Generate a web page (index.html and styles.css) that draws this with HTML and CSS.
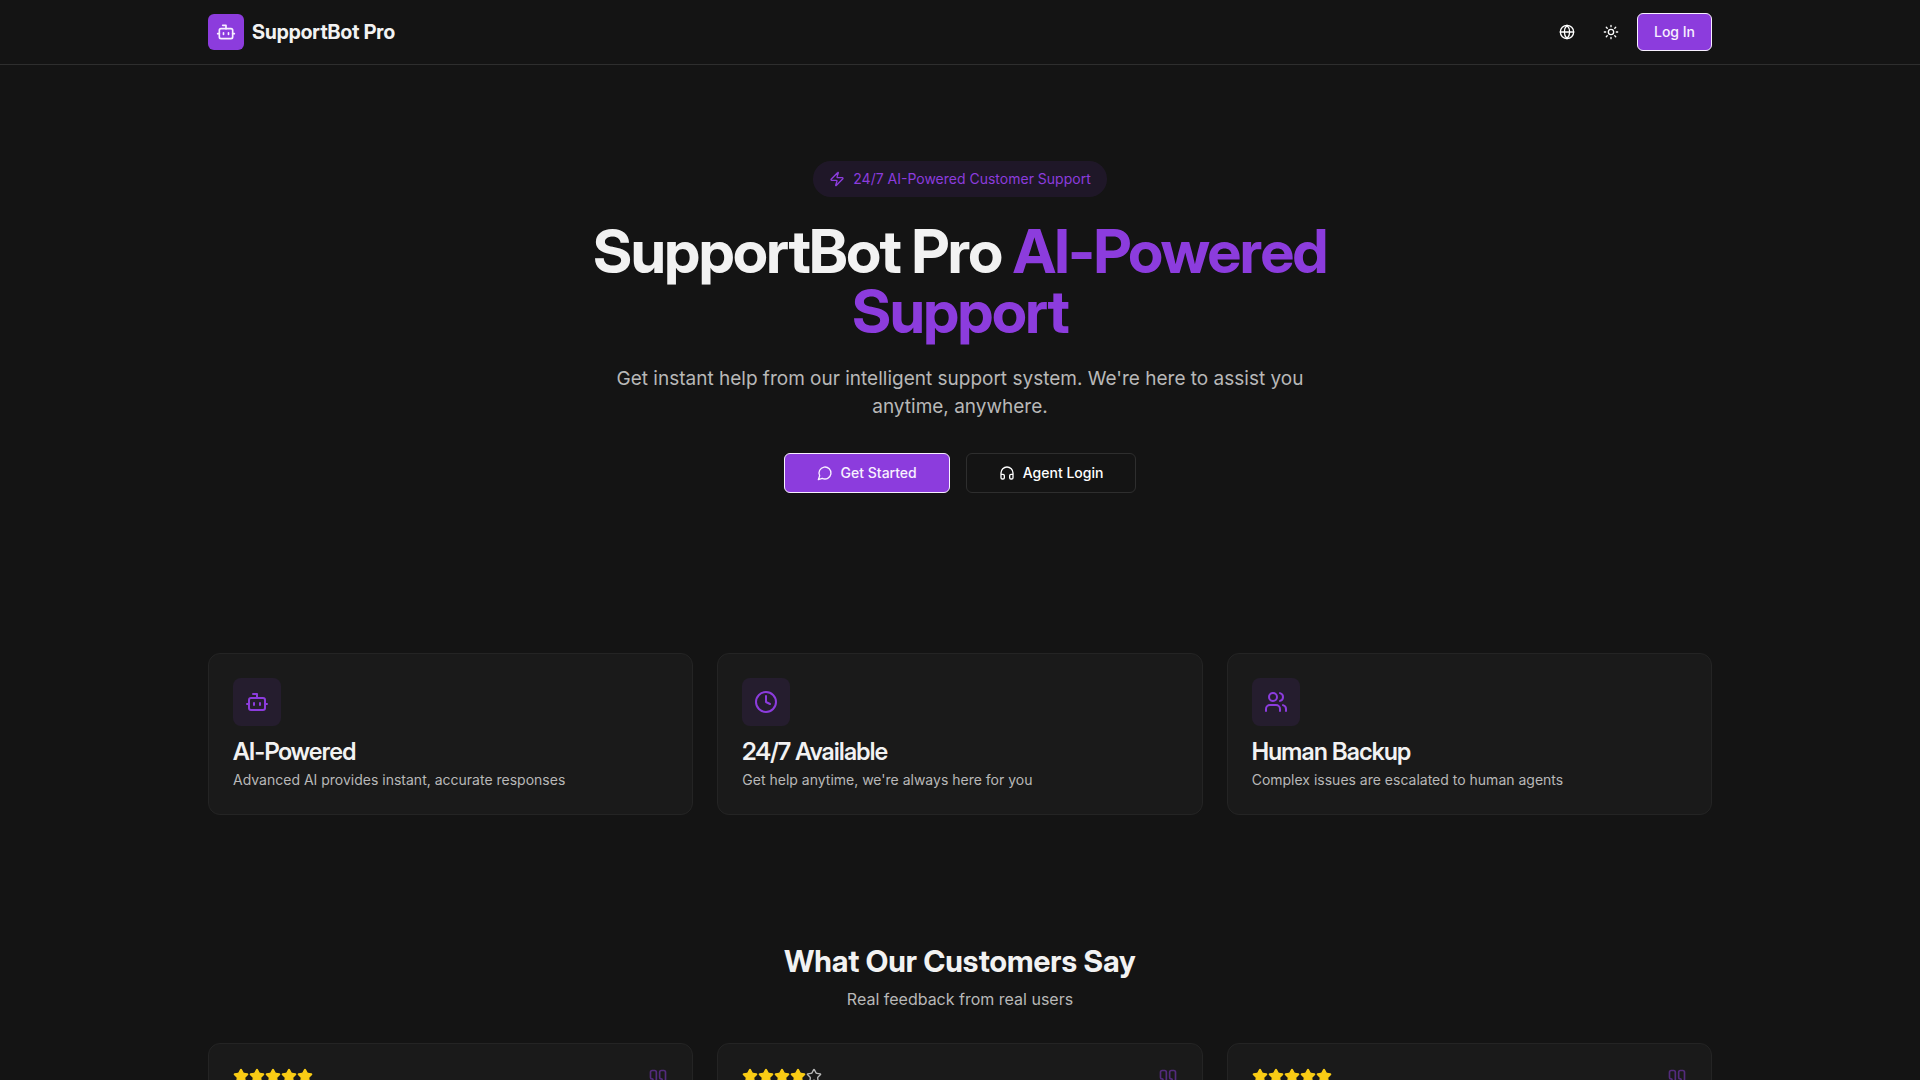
FILE: index.html
```html
<!DOCTYPE html>
<html lang="en">
<head>
<meta charset="utf-8">
<meta name="viewport" content="width=device-width, initial-scale=1">
<title>SupportBot Pro</title>
<link rel="stylesheet" href="styles.css">
</head>
<body>
<svg class="sprite" aria-hidden="true">
  <symbol id="bot" viewBox="0 0 24 24"><path d="M12 8V4H8"/><rect width="16" height="12" x="4" y="8" rx="2"/><path d="M2 14h2M20 14h2M15 13v2M9 13v2"/></symbol>
  <symbol id="globe" viewBox="0 0 24 24"><circle cx="12" cy="12" r="10"/><path d="M12 2a14.5 14.5 0 0 0 0 20 14.5 14.5 0 0 0 0-20M2 12h20"/></symbol>
  <symbol id="sun" viewBox="0 0 24 24"><circle cx="12" cy="12" r="4"/><path d="M12 2v2M12 20v2m-7.07-17.07 1.41 1.41m11.32 11.32 1.41 1.41M2 12h2m16 0h2M6.34 17.66l-1.41 1.41M19.07 4.93l-1.41 1.41"/></symbol>
  <symbol id="zap" viewBox="0 0 24 24"><path d="M4 14a1 1 0 0 1-.78-1.63l9.9-10.2a.5.5 0 0 1 .86.46l-1.92 6.02A1 1 0 0 0 13 10h7a1 1 0 0 1 .78 1.63l-9.9 10.2a.5.5 0 0 1-.86-.46l1.92-6.02A1 1 0 0 0 11 14z"/></symbol>
  <symbol id="message" viewBox="0 0 24 24"><path d="M7.9 20A9 9 0 1 0 4 16.1L2 22Z"/></symbol>
  <symbol id="headphones" viewBox="0 0 24 24"><path d="M3 14h3a2 2 0 0 1 2 2v3a2 2 0 0 1-2 2H5a2 2 0 0 1-2-2v-7a9 9 0 0 1 18 0v7a2 2 0 0 1-2 2h-1a2 2 0 0 1-2-2v-3a2 2 0 0 1 2-2h3"/></symbol>
  <symbol id="clock" viewBox="0 0 24 24"><circle cx="12" cy="12" r="10"/><path d="M12 6v6l4 2"/></symbol>
  <symbol id="users" viewBox="0 0 24 24"><path d="M16 21v-2a4 4 0 0 0-4-4H6a4 4 0 0 0-4 4v2"/><circle cx="9" cy="7" r="4"/><path d="M22 21v-2a4 4 0 0 0-3-3.87M16 3.13a4 4 0 0 1 0 7.75"/></symbol>
  <symbol id="star" viewBox="0 0 24 24"><path d="M11.525 2.295a.53.53 0 0 1 .95 0l2.31 4.679a2.123 2.123 0 0 0 1.595 1.16l5.166.756a.53.53 0 0 1 .294.904l-3.736 3.638a2.123 2.123 0 0 0-.611 1.878l.882 5.14a.53.53 0 0 1-.771.56l-4.618-2.428a2.122 2.122 0 0 0-1.973 0L6.396 21.01a.53.53 0 0 1-.77-.56l.881-5.139a2.122 2.122 0 0 0-.611-1.879L2.16 9.795a.53.53 0 0 1 .294-.906l5.165-.755a2.122 2.122 0 0 0 1.597-1.16z"/></symbol>
  <symbol id="quote" viewBox="0 0 24 24"><path d="M16 3a2 2 0 0 0-2 2v6a2 2 0 0 0 2 2 1 1 0 0 1 1 1v1a2 2 0 0 1-2 2 1 1 0 0 0-1 1v2a1 1 0 0 0 1 1 6 6 0 0 0 6-6V5a2 2 0 0 0-2-2z"/><path d="M5 3a2 2 0 0 0-2 2v6a2 2 0 0 0 2 2 1 1 0 0 1 1 1v1a2 2 0 0 1-2 2 1 1 0 0 0-1 1v2a1 1 0 0 0 1 1 6 6 0 0 0 6-6V5a2 2 0 0 0-2-2z"/></symbol>
</svg>

<header class="site-header">
  <div class="container header-row">
    <div class="brand">
      <span class="brand-mark"><svg class="icon icon-md"><use href="#bot"/></svg></span>
      <span class="brand-name">SupportBot Pro</span>
    </div>
    <nav class="actions" aria-label="Site">
      <button class="icon-button" type="button" aria-label="Language"><svg class="icon"><use href="#globe"/></svg></button>
      <button class="icon-button" type="button" aria-label="Theme"><svg class="icon"><use href="#sun"/></svg></button>
      <button class="button button-primary" type="button">Log In</button>
    </nav>
  </div>
</header>

<main>
  <section class="hero container">
    <div class="badge"><svg class="icon"><use href="#zap"/></svg><span>24/7 AI-Powered Customer Support</span></div>
    <h1 class="hero-title">SupportBot Pro <span class="accent">AI-Powered Support</span></h1>
    <p class="hero-text">Get instant help from our intelligent support system. We're here to assist you anytime, anywhere.</p>
    <div class="hero-actions">
      <button class="button button-large button-primary" type="button"><svg class="icon"><use href="#message"/></svg>Get Started</button>
      <button class="button button-large button-outline" type="button"><svg class="icon"><use href="#headphones"/></svg>Agent Login</button>
    </div>
  </section>

  <section class="section container" aria-label="Features">
    <div class="card-grid">
      <article class="card feature">
        <div class="feature-mark"><svg class="icon icon-lg"><use href="#bot"/></svg></div>
        <h3 class="feature-title">AI-Powered</h3>
        <p class="feature-text">Advanced AI provides instant, accurate responses</p>
      </article>
      <article class="card feature">
        <div class="feature-mark"><svg class="icon icon-lg"><use href="#clock"/></svg></div>
        <h3 class="feature-title">24/7 Available</h3>
        <p class="feature-text">Get help anytime, we're always here for you</p>
      </article>
      <article class="card feature">
        <div class="feature-mark"><svg class="icon icon-lg"><use href="#users"/></svg></div>
        <h3 class="feature-title">Human Backup</h3>
        <p class="feature-text">Complex issues are escalated to human agents</p>
      </article>
    </div>
  </section>

  <section class="section container">
    <div class="section-heading">
      <h2 class="section-title">What Our Customers Say</h2>
      <p class="section-text">Real feedback from real users</p>
    </div>
    <div class="card-grid">
      <article class="card review">
        <div class="stars" role="img" aria-label="5 of 5 stars"><svg class="icon star"><use href="#star"/></svg><svg class="icon star"><use href="#star"/></svg><svg class="icon star"><use href="#star"/></svg><svg class="icon star"><use href="#star"/></svg><svg class="icon star"><use href="#star"/></svg></div>
        <svg class="icon icon-md quote"><use href="#quote"/></svg>
      </article>
      <article class="card review">
        <div class="stars" role="img" aria-label="4 of 5 stars"><svg class="icon star"><use href="#star"/></svg><svg class="icon star"><use href="#star"/></svg><svg class="icon star"><use href="#star"/></svg><svg class="icon star"><use href="#star"/></svg><svg class="icon star-empty"><use href="#star"/></svg></div>
        <svg class="icon icon-md quote"><use href="#quote"/></svg>
      </article>
      <article class="card review">
        <div class="stars" role="img" aria-label="5 of 5 stars"><svg class="icon star"><use href="#star"/></svg><svg class="icon star"><use href="#star"/></svg><svg class="icon star"><use href="#star"/></svg><svg class="icon star"><use href="#star"/></svg><svg class="icon star"><use href="#star"/></svg></div>
        <svg class="icon icon-md quote"><use href="#quote"/></svg>
      </article>
    </div>
  </section>
</main>
</body>
</html>
```
FILE: styles.css
```css
:root {
  --bg: #141414;
  --card: #1a1a1a;
  --card-border: #242424;
  --line: #2e2e2e;
  --text: #f2f2f2;
  --muted: #b8b8b8;
  --primary: #8c3cdd;
  --primary-soft: rgb(140 60 221 / 10%);
  --on-primary: #f8f0ff;
  --font-display: "Inter Display", Inter, "Liberation Sans", sans-serif;
}

*, *::before, *::after { box-sizing: border-box; }

html { scrollbar-width: none; }

body {
  margin: 0;
  background: var(--bg);
  color: var(--text);
  font-family: Inter, "Liberation Sans", sans-serif;
  font-size: 16px;
  line-height: 24px;
}

h1, h2, h3, p { margin: 0; }

.sprite { display: none; }

.container {
  width: 100%;
  max-width: 1536px;
  margin: 0 auto;
  padding-inline: 16px;
}

.icon {
  width: 16px;
  height: 16px;
  flex: none;
  fill: none;
  stroke: currentColor;
  stroke-width: 2;
  stroke-linecap: round;
  stroke-linejoin: round;
}
.icon-md { width: 20px; height: 20px; }
.icon-lg { width: 24px; height: 24px; }

/* Header */
.site-header { border-bottom: 1px solid var(--line); }

.header-row {
  display: flex;
  align-items: center;
  justify-content: space-between;
  min-height: 64px;
}

.brand, .actions {
  display: flex;
  align-items: center;
  gap: 8px;
}

.brand-mark {
  display: grid;
  place-items: center;
  width: 36px;
  height: 36px;
  border-radius: 6px;
  background: var(--primary);
  color: var(--on-primary);
}

.brand-name {
  font-family: var(--font-display);
  font-size: 20px;
  line-height: 28px;
  font-weight: 700;
}

/* Buttons */
.button, .icon-button {
  display: inline-flex;
  align-items: center;
  justify-content: center;
  gap: 8px;
  border: 1px solid transparent;
  border-radius: 6px;
  background: transparent;
  color: #fff;
  font: 500 14px/20px Inter, "Liberation Sans", sans-serif;
  cursor: pointer;
}

.icon-button {
  width: 36px;
  height: 36px;
  padding: 0;
}

.button { padding: 8px 16px; }

.button-large {
  min-height: 40px;
  padding-inline: 32px;
}

.button-primary {
  border-color: var(--on-primary);
  background: var(--primary);
  color: var(--on-primary);
}

.button-outline { border-color: var(--line); }

/* Hero */
.hero {
  display: flex;
  flex-direction: column;
  align-items: center;
  gap: 24px;
  padding-block: 96px;
  text-align: center;
}

.badge {
  display: flex;
  align-items: center;
  gap: 8px;
  padding: 8px 16px;
  border-radius: 18px;
  background: var(--primary-soft);
  color: var(--primary);
  font-size: 14px;
  line-height: 20px;
}

.hero-title {
  max-width: 768px;
  font-family: var(--font-display);
  font-size: 60px;
  line-height: 60px;
  font-weight: 700;
  letter-spacing: -0.025em;
}

.accent { color: var(--primary); }

.hero-text {
  max-width: 720px;
  color: var(--muted);
  font-size: 19px;
  line-height: 28px;
}

.hero-actions {
  display: flex;
  flex-wrap: wrap;
  justify-content: center;
  gap: 16px;
  padding-top: 8px;
}

/* Sections and cards */
.section { padding-block: 64px; }

.card-grid {
  display: grid;
  grid-template-columns: repeat(auto-fit, minmax(320px, 1fr));
  gap: 24px;
}

.card {
  padding: 24px;
  border: 1px solid var(--card-border);
  border-radius: 12px;
  background: var(--card);
}

.feature {
  display: flex;
  flex-direction: column;
  gap: 6px;
}

.feature-mark {
  display: grid;
  place-items: center;
  width: 48px;
  height: 48px;
  margin-bottom: 8px;
  border-radius: 8px;
  background: var(--primary-soft);
  color: var(--primary);
}

.feature-title {
  font-family: var(--font-display);
  font-size: 24px;
  line-height: 24px;
  font-weight: 600;
  letter-spacing: -0.025em;
}

.feature-text {
  color: var(--muted);
  font-size: 14px;
  line-height: 20px;
}

.section-heading {
  display: flex;
  flex-direction: column;
  gap: 8px;
  margin-bottom: 32px;
  text-align: center;
}

.section-title {
  font-family: var(--font-display);
  font-size: 30px;
  line-height: 36px;
  font-weight: 700;
}

.section-text { color: var(--muted); }

.review {
  display: flex;
  align-items: flex-start;
  justify-content: space-between;
}

.stars {
  display: flex;
  color: var(--muted);
}

.star {
  fill: #facc15;
  stroke: #facc15;
}

.quote {
  color: var(--primary);
  opacity: 0.5;
}
```
